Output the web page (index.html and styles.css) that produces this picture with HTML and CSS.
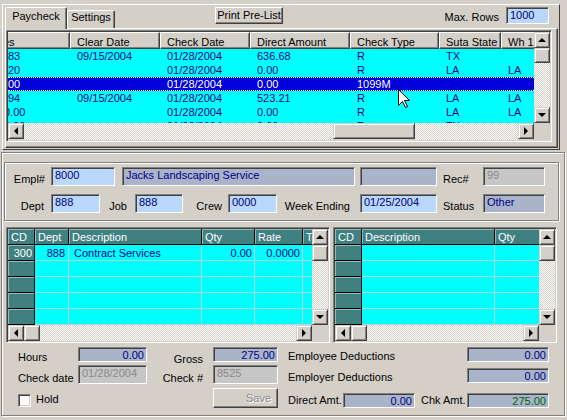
FILE: index.html
```html
<!DOCTYPE html>
<html lang="en">
<head>
  <meta charset="UTF-8" />
  <title>Paycheck</title>
  <link rel="stylesheet" href="styles.css">
</head>
<body>
  <div class="top">
    <div class="tabbar">
      <div class="tab active">Paycheck</div>
      <div class="tab">Settings</div>
      <div class="btn print">Print Pre-List</div>
      <span class="maxlbl">Max. Rows</span>
      <div class="fld blue maxrows">1000</div>
    </div>
    <div class="tabpage">
      <div class="grid paylist">
        <div class="gbody">
          <div class="ghead">
            <div class="c0"><span class="cuthead">es</span></div>
            <div>Clear Date</div>
            <div>Check Date</div>
            <div>Direct Amount</div>
            <div>Check Type</div>
            <div>Suta State</div>
            <div>Wh 1 Status</div>
          </div>
          <div class="row"><div class="c0">83</div><div>09/15/2004</div><div>01/28/2004</div><div>636.68</div><div>R</div><div>TX</div><div></div></div>
          <div class="row"><div class="c0">20</div><div></div><div>01/28/2004</div><div>0.00</div><div>R</div><div>LA</div><div>LA</div></div>
          <div class="row sel"><div class="c0">00</div><div></div><div>01/28/2004</div><div>0.00</div><div>1099M</div><div></div><div></div></div>
          <div class="row"><div class="c0">94</div><div>09/15/2004</div><div>01/28/2004</div><div>523.21</div><div>R</div><div>LA</div><div>LA</div></div>
          <div class="row"><div class="c0 cut">0.00</div><div></div><div>01/28/2004</div><div>0.00</div><div>R</div><div>LA</div><div>LA</div></div>
          <div class="row"><div class="c0 cut">0.00</div><div></div><div>01/28/2004</div><div>0.00</div><div>R</div><div>TX</div><div></div></div>
        </div>
        <div class="vsb">
          <div class="sbtn up"></div>
          <div class="thumb tv"></div>
          <div class="track"></div>
          <div class="sbtn down"></div>
        </div>
        <div class="hsb">
          <div class="sbtn left"></div>
          <div class="track pre"></div>
          <div class="thumb th"></div>
          <div class="track"></div>
          <div class="sbtn right"></div>
        </div>
        <div class="corner"></div>
      </div>
    </div>
  </div>

  <div class="lower">
    <div class="group">
      <div class="frow r1">
        <span class="lb w-empl">Empl#</span>
        <div class="fld blue f-empl">8000</div>
        <div class="fld slate f-name">Jacks Landscaping Service</div>
        <div class="fld slate f-blank"></div>
        <span class="lb w-rec">Rec#</span>
        <div class="fld dis f-rec">99</div>
      </div>
      <div class="frow r2">
        <span class="lb w-dept">Dept</span>
        <div class="fld blue f-dept">888</div>
        <span class="lb w-job">Job</span>
        <div class="fld blue f-job">888</div>
        <span class="lb w-crew">Crew</span>
        <div class="fld blue f-crew">0000</div>
        <span class="lb w-week">Week Ending</span>
        <div class="fld blue f-week">01/25/2004</div>
        <span class="lb w-rec">Status</span>
        <div class="fld slate f-rec">Other</div>
      </div>
    </div>

    <div class="grids">
      <div class="grid det dleft">
        <div class="gbody">
          <div class="lh"><div>CD</div><div>Dept</div><div>Description</div><div>Qty</div><div>Rate</div><div>Total</div></div>
          <div class="lr"><div class="fx num">300</div><div class="num">888</div><div>Contract Services</div><div class="num">0.00</div><div class="num">0.0000</div><div></div></div>
          <div class="lr"><div class="fx"></div><div></div><div></div><div></div><div></div><div></div></div>
          <div class="lr"><div class="fx"></div><div></div><div></div><div></div><div></div><div></div></div>
          <div class="lr"><div class="fx"></div><div></div><div></div><div></div><div></div><div></div></div>
          <div class="lr"><div class="fx"></div><div></div><div></div><div></div><div></div><div></div></div>
        </div>
        <div class="vsb">
          <div class="sbtn up"></div>
          <div class="thumb"></div>
          <div class="track"></div>
          <div class="sbtn down"></div>
        </div>
        <div class="hsb">
          <div class="sbtn left"></div>
          <div class="thumb"></div>
          <div class="track"></div>
          <div class="sbtn right"></div>
        </div>
        <div class="corner"></div>
      </div>

      <div class="grid det dright">
        <div class="gbody">
          <div class="lh"><div>CD</div><div>Description</div><div>Qty</div></div>
          <div class="lr"><div class="fx"></div><div></div><div></div></div>
          <div class="lr"><div class="fx"></div><div></div><div></div></div>
          <div class="lr"><div class="fx"></div><div></div><div></div></div>
          <div class="lr"><div class="fx"></div><div></div><div></div></div>
          <div class="lr"><div class="fx"></div><div></div><div></div></div>
        </div>
        <div class="vsb">
          <div class="sbtn up"></div>
          <div class="thumb"></div>
          <div class="track"></div>
          <div class="sbtn down"></div>
        </div>
        <div class="hsb">
          <div class="sbtn left"></div>
          <div class="thumb"></div>
          <div class="track"></div>
          <div class="sbtn right"></div>
        </div>
        <div class="corner"></div>
      </div>
    </div>

    <div class="bottom">
      <div class="bl">
        <div class="brow b1">
          <span class="bt hours">Hours</span>
          <div class="fld slate small num f-hours">0.00</div>
          <span class="bt rlab gross">Gross</span>
          <div class="fld slate small num f-gross">275.00</div>
        </div>
        <div class="brow b2">
          <span class="bt chkdate">Check date</span>
          <div class="fld dis f-hours">01/28/2004</div>
          <span class="bt rlab chkno">Check #</span>
          <div class="fld dis f-gross">8525</div>
        </div>
        <div class="brow b3">
          <div class="chk"></div>
          <span class="bt hold">Hold</span>
          <div class="btn save">Save</div>
        </div>
      </div>
      <div class="br">
        <div class="brow c1">
          <span class="bt dedlab">Employee Deductions</span>
          <div class="fld slate small num f-ded">0.00</div>
        </div>
        <div class="brow c2">
          <span class="bt dedlab">Employer Deductions</span>
          <div class="fld slate small num f-ded">0.00</div>
        </div>
        <div class="brow c3">
          <span class="bt directlab">Direct Amt.</span>
          <div class="fld slate small num f-direct">0.00</div>
          <span class="bt chkamtlab">Chk Amt.</span>
          <div class="fld slate small num green f-ded">275.00</div>
        </div>
      </div>
    </div>
  </div>

  <!-- mouse pointer over the selected row -->
  <svg class="cursor" width="12" height="19" viewBox="0 0 12 19">
    <path d="M0.5 0.5 V16.5 L4.5 12.5 L7.5 18.5 L9.5 17.5 L6.5 11.5 H11.5 Z" fill="#fff" stroke="#000" stroke-width="1"/>
  </svg>
</body>
</html>
```

FILE: styles.css
```css
/* Reset */
* {
  margin: 0;
  padding: 0;
  box-sizing: border-box;
}
body {
  width: 567px;
  height: 420px;
  overflow: hidden;
  position: relative;
  background: #d4d0c8;
  font-family: "Liberation Sans", Arial, sans-serif;
  font-size: 11px;
  line-height: 13px;
  color: #000;
}

/* Top panel with tabs */
.top {
  margin: 4px 0 0 2px;
  width: 558px;
  height: 146px;
  border: 1px solid;
  border-color: #fff #404040 #404040 #fff;
}
.tabbar {
  display: flex;
  align-items: flex-end;
  height: 23px;
}
.tab {
  flex: none;
  width: 48px;
  height: 18px;
  text-align: center;
  background: #d4d0c8;
  border: 1px solid;
  border-bottom: none;
  border-color: #fff #404040 #fff #fff;
  box-shadow: inset -1px 0 #808080;
  border-radius: 2px 2px 0 0;
}
.tab.active {
  width: 62px;
  height: 22px;
  margin-left: 2px;
  margin-bottom: -1px;
  padding-top: 2px;
  position: relative;
  z-index: 1;
}
.btn {
  background: #d4d0c8;
  border: 1px solid;
  border-color: #fff #404040 #404040 #fff;
  box-shadow: inset -1px -1px #808080;
  text-align: center;
}
.print {
  align-self: flex-start;
  width: 68px;
  height: 17px;
  margin: 2px 0 0 100px;
  padding-top: 1px;
}
.maxlbl {
  align-self: flex-start;
  margin: 6px 7px 0 auto;
}
.maxrows {
  align-self: flex-start;
  width: 43px;
  height: 17px;
  margin: 2px 10px 0 0;
}
.tabpage {
  margin-left: 2px;
  width: 553px;
  height: 120px;
  padding-top: 1px;
  border: 1px solid;
  border-color: #fff #404040 #404040 #fff;
  box-shadow: inset -1px -1px #808080;
}

/* Fields */
.fld {
  flex: none;
  border: 1px solid;
  border-color: #808080 #fff #fff #808080;
  box-shadow: inset 1px 1px #404040;
  padding: 1px 3px 0;
  color: #000080;
  white-space: nowrap;
  overflow: hidden;
}
.blue { background: #bad8fb; }
.slate { background: #a9b4cb; }
.dis { background: #c6c6c6; color: #8a8a8a; }
.green { color: #006400; }
.num { text-align: right; }
.fld.num { padding-right: 2px; }

/* Grids */
.grid {
  display: grid;
  grid-template-columns: 1fr 16px;
  padding: 1px;
  border: 1px solid;
  border-color: #808080 #fff #fff #808080;
  box-shadow: inset 1px 1px #404040;
  background: #d4d0c8;
}
.gbody {
  overflow: hidden;
  background: #00ffff;
}
.corner { background: #d4d0c8; }
.vsb {
  display: flex;
  flex-direction: column;
}
.hsb { display: flex; }
.track {
  flex: 1;
  background: repeating-conic-gradient(#fff 0 25%, #d4d0c8 0 50%) 0 0 / 2px 2px;
}
.sbtn, .thumb {
  flex: none;
  width: 16px;
  height: 16px;
  background: #d4d0c8;
  border: 1px solid;
  border-color: #d4d0c8 #404040 #404040 #d4d0c8;
  box-shadow: inset 1px 1px #fff, inset -1px -1px #808080;
}
.sbtn {
  display: flex;
  align-items: center;
  justify-content: center;
}
.sbtn::after {
  content: "";
  border: 4px solid transparent;
}
.up::after { border-top: none; border-bottom-color: #000; }
.down::after { border-bottom: none; border-top-color: #000; }
.left::after { border-left: none; border-right-color: #000; }
.right::after { border-right: none; border-left-color: #000; }

/* Paycheck list */
.paylist {
  margin-top: 0;
  width: 546px;
  height: 112px;
  grid-template-rows: 91px 1fr;
}
.ghead, .row { display: flex; }
.ghead { background: #d4d0c8; }
.ghead > div {
  flex: none;
  height: 17px;
  padding: 3px 0 0 6px;
  white-space: nowrap;
  border: 1px solid;
  border-color: #fff #404040 #404040 #fff;
  box-shadow: inset -1px -1px #808080;
}
.ghead > .c0 {
  padding-left: 0;
  border-left: none;
}
.cuthead {
  display: inline-block;
  margin-left: -5px;
}
.row > div {
  flex: none;
  height: 14px;
  padding: 1px 0 0 7px;
  white-space: nowrap;
  color: #000080;
}
.row > .c0 { padding-left: 0; }
.row > .cut { text-indent: -4px; }
.row.sel {
  background: #0000d8;
  border-top: 1px dotted #fff;
  border-bottom: 1px dotted #fff;
}
.row.sel > div {
  height: 12px;
  padding-top: 0;
  color: #fff;
}
.paylist .ghead > :nth-child(1), .paylist .row > :nth-child(1) { width: 62px; }
.paylist .ghead > :nth-child(2), .paylist .row > :nth-child(2) { width: 90px; }
.paylist .ghead > :nth-child(3), .paylist .row > :nth-child(3) { width: 90px; }
.paylist .ghead > :nth-child(4), .paylist .row > :nth-child(4) { width: 100px; }
.paylist .ghead > :nth-child(5), .paylist .row > :nth-child(5) { width: 89px; }
.paylist .ghead > :nth-child(6), .paylist .row > :nth-child(6) { width: 62px; }
.paylist .ghead > :nth-child(7), .paylist .row > :nth-child(7) { width: 70px; }
.tv { height: 15px; }
.pre { flex: 0 0 309px; }
.th { width: 82px; }

/* Lower panel */
.lower {
  margin: 2px 2px 0 1px;
  height: 264px;
  border: 1px solid #808080;
  box-shadow: inset 1px 1px #fff, 1px 1px #fff;
}
.group {
  margin: 9px 0 0 2px;
  width: 555px;
  height: 59px;
  padding-top: 3px;
  border: 1px solid #808080;
  box-shadow: inset 1px 1px #fff, 1px 1px #fff;
}
.frow {
  display: flex;
  align-items: flex-end;
  height: 19px;
}
.frow .fld { height: 19px; }
.r1 { margin-top: 1px; }
.r2 { margin-top: 8px; }
.lb {
  flex: none;
  text-align: right;
  white-space: nowrap;
}
.w-empl { width: 46px; padding-right: 6px; }
.w-dept { width: 46px; padding-right: 7px; }
.w-job { width: 35px; padding-right: 8px; }
.w-crew { width: 45px; padding-right: 6px; }
.w-week { width: 83px; padding-right: 10px; }
.w-rec { width: 46px; padding-left: 6px; text-align: left; }
.f-empl { width: 64px; }
.f-name { width: 233px; margin-left: 7px; }
.f-blank { width: 77px; margin-left: 5px; }
.f-rec { width: 62px; }
.f-dept { width: 49px; }
.f-job { width: 48px; }
.f-crew { width: 49px; }
.f-week { width: 77px; }

/* Detail grids */
.grids {
  display: flex;
  gap: 3px;
  margin: 6px 0 0 4px;
}
.det {
  height: 116px;
  grid-template-rows: 96px 1fr;
}
.dleft { width: 324px; }
.dright { width: 224px; }
.lh, .lr { display: flex; }
.lh > div {
  flex: none;
  height: 16px;
  padding: 2px 0 0 3px;
  white-space: nowrap;
  background: #408080;
  color: #fff;
  border-right: 1px solid #000;
  border-bottom: 1px solid #000;
  box-shadow: inset 1px 1px #8fbcbc;
}
.lr > div {
  flex: none;
  height: 16px;
  padding: 2px 4px 0 5px;
  white-space: nowrap;
  color: #000080;
  border-right: 1px solid #a6dada;
  border-bottom: 1px solid #a6dada;
}
.lr > .num { padding-right: 2px; }
.lr > :nth-child(2).num { padding-right: 3px; }
.lr > .fx {
  background: #408080;
  color: #fff;
  border-right-color: #000;
  border-bottom-color: #000;
  box-shadow: inset 1px 1px #8fbcbc;
}
.dleft .lh > :nth-child(1), .dleft .lr > :nth-child(1) { width: 27px; }
.dleft .lh > :nth-child(2), .dleft .lr > :nth-child(2) { width: 34px; }
.dleft .lh > :nth-child(3), .dleft .lr > :nth-child(3) { width: 133px; }
.dleft .lh > :nth-child(4), .dleft .lr > :nth-child(4) { width: 53px; }
.dleft .lh > :nth-child(5), .dleft .lr > :nth-child(5) { width: 48px; }
.dleft .lh > :nth-child(6), .dleft .lr > :nth-child(6) { width: 40px; }
.dright .lh > :nth-child(1), .dright .lr > :nth-child(1) { width: 27px; }
.dright .lh > :nth-child(2), .dright .lr > :nth-child(2) { width: 133px; }
.dright .lh > :nth-child(3), .dright .lr > :nth-child(3) { width: 60px; }

/* Totals */
.bottom {
  display: flex;
  margin: 4px 0 0 16px;
}
.bl { width: 260px; }
.br { width: 261px; margin-left: 10px; }
.brow {
  display: flex;
  align-items: flex-start;
}
.bt {
  flex: none;
  white-space: nowrap;
}
.small { height: 15px; }
.b1 { height: 15px; }
.b2 { height: 19px; margin-top: 3px; }
.b2 .fld { height: 19px; }
.b3 { height: 20px; margin-top: 4px; }
.hours { width: 60px; padding-top: 4px; }
.chkdate { width: 60px; padding-top: 7px; }
.rlab { width: 66px; padding-right: 10px; text-align: right; }
.gross { padding-top: 6px; }
.chkno { padding-top: 7px; }
.f-hours { width: 69px; }
.f-gross { width: 65px; }
.chk {
  flex: none;
  width: 13px;
  height: 13px;
  margin-top: 6px;
  background: #fff;
  border: 1px solid;
  border-color: #808080 #fff #fff #808080;
  box-shadow: inset 1px 1px #404040, inset -1px -1px #d4d0c8;
}
.hold { margin-left: 5px; padding-top: 5px; }
.save {
  width: 65px;
  height: 20px;
  margin-left: auto;
  padding: 3px 6px 0 0;
  text-align: right;
  color: #8a8a8a;
  text-shadow: 1px 1px #fff;
}
.c1 { height: 15px; }
.c2 { height: 15px; margin-top: 6px; }
.c3 { height: 15px; margin-top: 10px; }
.dedlab { flex: 1; padding-top: 3px; }
.f-ded { width: 82px; }
.directlab { width: 55px; padding-top: 1px; }
.f-direct { width: 72px; }
.chkamtlab { width: 52px; padding: 1px 0 0 6px; }

/* Pointer */
.cursor {
  position: absolute;
  left: 398px;
  top: 89px;
}
```
